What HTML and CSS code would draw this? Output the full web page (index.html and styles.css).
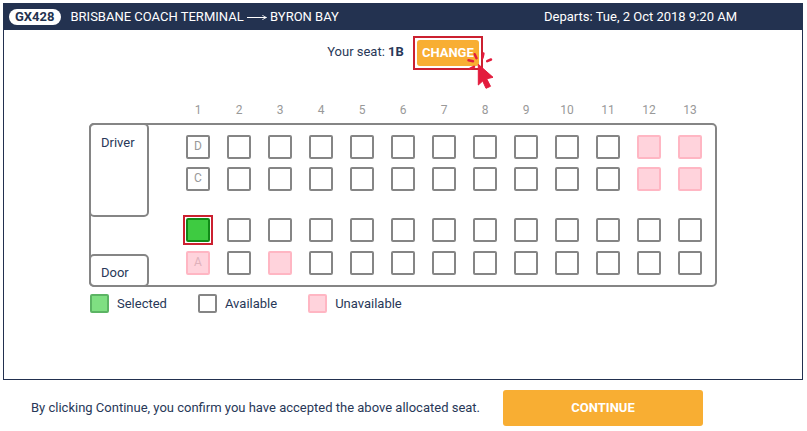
FILE: index.html
```html
<!DOCTYPE html>
<html lang="en">
<head>
<meta charset="utf-8">
<meta name="viewport" content="width=device-width, initial-scale=1">
<title>Seat selection</title>
<link rel="stylesheet" href="styles.css">
</head>
<body>
<main class="panel">
  <header class="trip">
    <span class="service">GX428</span>
    <span class="route">BRISBANE COACH TERMINAL
      <svg class="arrow" viewBox="0 0 20 8" aria-label="to"><path d="M0 4.500H19M15.500 2Q16.500 4 19.500 4.500Q16.500 5 15.500 7"/></svg>
      BYRON BAY</span>
    <span class="departs">Departs: Tue, 2 Oct 2018 9:20 AM</span>
  </header>
  <section class="current">
    <span>Your seat: <strong>1B</strong></span>
    <div class="highlight">
      <button class="btn change" type="button">CHANGE</button>
      <svg class="pointer" viewBox="0 0 28 38" aria-hidden="true">
        <path class="rays" d="M8.700 3.200L10.500 7.200M17.400 2.500L16.500 6.800M25 8.500L21.200 10.200M2.500 9.300L7 10.200M4.300 17.600L8 15.800"/>
        <path class="hand" d="M12.300 13.300L27 26.300L20.700 27.800L24.500 35.300L20 37.300L16.700 30L12.300 34Z"/>
      </svg>
    </div>
  </section>
  <section class="coach">
    <div class="numbers" id="numbers"></div>
    <div class="bus">
      <div class="cabin">
        <div class="box driver">Driver</div>
        <div class="box door">Door</div>
      </div>
      <div class="seats" id="seats"></div>
    </div>
    <ul class="legend">
      <li><span class="swatch picked"></span>Selected</li>
      <li><span class="swatch"></span>Available</li>
      <li><span class="swatch taken"></span>Unavailable</li>
    </ul>
  </section>
</main>
<footer class="confirm">
  <p>By clicking Continue, you confirm you have accepted the above allocated seat.</p>
  <button class="btn continue" type="button">CONTINUE</button>
</footer>
<script src="seats.js"></script>
</body>
</html>
```
FILE: styles.css
```css
* { box-sizing: border-box; }

body {
  margin: 0;
  padding: 3px 4px 4px 3px;
  background: #fff;
  color: #283858;
  font: 13px/16px Roboto, "Liberation Sans", sans-serif;
}

button { font: inherit; }

.panel {
  border: 1px solid #22304f;
  padding-bottom: 66px;
}

.trip {
  display: flex;
  align-items: center;
  margin: -1px;
  padding: 0 66px 0 6px;
  height: 27px;
  background: #233250;
  color: #fff;
}

.service {
  padding: 0 6px;
  border-radius: 8px;
  background: #fff;
  color: #233250;
  font-weight: 700;
}

.route { margin-left: 10px; }

.arrow {
  width: 20px;
  height: 8px;
  fill: none;
  stroke: #fff;
}

.departs { margin-left: auto; }

.current {
  display: flex;
  justify-content: center;
  align-items: center;
  gap: 9px;
  padding: 7px 0 0 4px;
}

.current > span { padding-bottom: 2px; }

.highlight {
  position: relative;
  padding: 2px;
  border: 2px solid #cb2030;
}

.btn {
  display: block;
  padding: 0;
  border: 0;
  border-radius: 3px;
  background: #f8ae33;
  color: #fff;
  font-weight: 700;
}

.change {
  width: 62px;
  height: 26px;
}

.pointer {
  position: absolute;
  top: 13px;
  left: 51px;
  width: 28px;
  height: 38px;
}

.rays {
  fill: none;
  stroke: #e31b3d;
  stroke-width: 2.5;
  stroke-linecap: round;
}

.hand {
  fill: #e31b3d;
  stroke: #e31b3d;
  stroke-linejoin: round;
}

.coach {
  max-width: 628px;
  margin: 0 auto;
  padding-top: 32px;
}

.numbers,
.seats {
  display: grid;
  grid-template-columns: repeat(13, 24px);
  justify-content: end;
  column-gap: 17px;
}

.numbers {
  padding: 0 15px 5px 0;
  color: #999;
  font-size: 12px;
  text-align: center;
}

.bus {
  display: flex;
  justify-content: space-between;
  border: 2px solid #858585;
  border-radius: 5px;
}

.cabin {
  display: flex;
  flex-direction: column;
  justify-content: space-between;
  width: 60px;
  margin: -2px 0 -2px -2px;
}

.box {
  display: flex;
  padding: 0 10px;
  border: 2px solid #858585;
  border-radius: 5px;
}

.driver {
  height: 94px;
  padding-top: 10px;
}

.door {
  height: 33px;
  align-items: end;
  padding-bottom: 4px;
}

/* The third track is the aisle between the two pairs of seat rows. */
.seats {
  grid-template-rows: 32px 24px 27px 33px 24px;
  padding: 10px 13px 10px 0;
}

.seat {
  position: relative;
  width: 24px;
  height: 24px;
  padding: 0 0 2px;
  border: 2px solid #858585;
  border-radius: 2px;
  background: #fff;
  color: #999;
  font-size: 12px;
}

.taken {
  border-color: #ffb6c3;
  background: #ffd3dc;
  color: #dfb1bb;
}

.selected {
  border-color: #118a17;
  background: #3ecb41;
}

.selected::before {
  content: "";
  position: absolute;
  inset: -5px;
  border: 2px solid #cb2030;
}

.legend {
  display: flex;
  gap: 31px;
  margin: 0;
  padding: 7px 0 0 1px;
  list-style: none;
}

.legend li {
  display: flex;
  align-items: center;
  gap: 8px;
}

.swatch {
  width: 19px;
  height: 19px;
  border: 2px solid #858585;
  border-radius: 2px;
}

.swatch.picked {
  border-color: #5cb464;
  background: #7fdf82;
}

.swatch.taken { border-color: #ffb6c3; }

.confirm {
  display: flex;
  align-items: center;
  gap: 23px;
  padding: 10px 28px 0;
}

.confirm p { margin: 0; }

.continue {
  width: 200px;
  height: 36px;
}
```
FILE: seats.js
```js
const COLUMNS = 13;
const ROWS = { D: 1, C: 2, B: 4, A: 5 };
const TAKEN = ["D12", "D13", "C12", "C13", "A1", "A3"];
const SELECTED = "B1";

const numbers = document.getElementById("numbers");
const seats = document.getElementById("seats");

for (let n = 1; n <= COLUMNS; n++) {
  const label = document.createElement("span");
  label.textContent = n;
  numbers.append(label);
}

for (const [row, track] of Object.entries(ROWS)) {
  for (let n = 1; n <= COLUMNS; n++) {
    const seat = document.createElement("button");
    const id = row + n;
    seat.type = "button";
    seat.className = "seat";
    seat.style.gridRow = track;
    if (TAKEN.includes(id)) seat.classList.add("taken");
    if (id === SELECTED) seat.classList.add("selected");
    if (n === 1 && id !== SELECTED) seat.textContent = row;
    seats.append(seat);
  }
}
```
